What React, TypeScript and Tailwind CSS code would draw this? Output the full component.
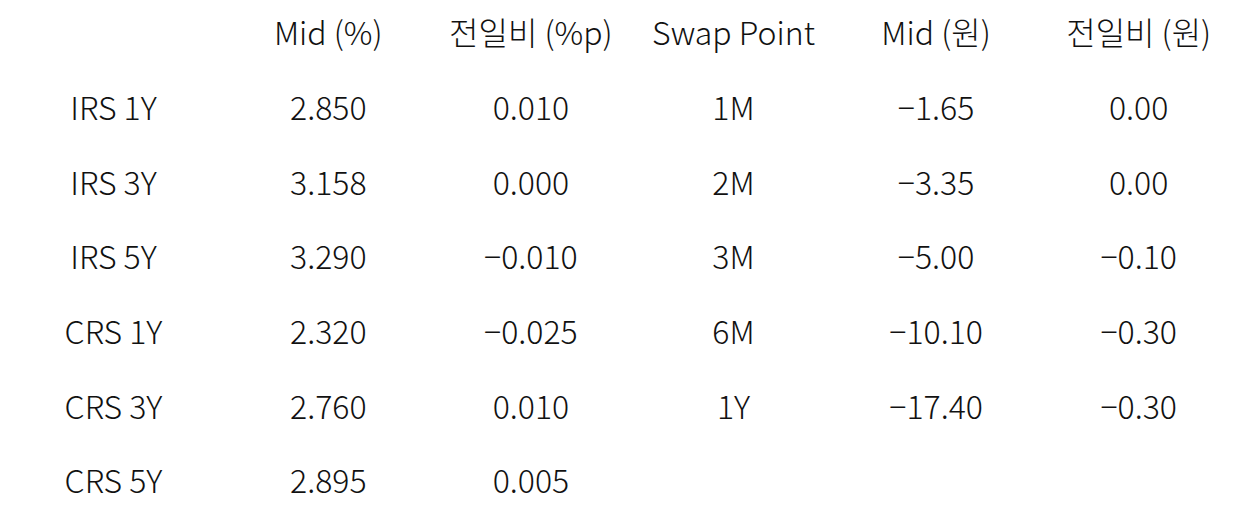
import React from "react";

const headers = ["", "Mid (%)", "전일비 (%p)", "Swap Point", "Mid (원)", "전일비 (원)"];

const rows: string[][] = [
  ["IRS 1Y", "2.850", "0.010", "1M", "−1.65", "0.00"],
  ["IRS 3Y", "3.158", "0.000", "2M", "−3.35", "0.00"],
  ["IRS 5Y", "3.290", "−0.010", "3M", "−5.00", "−0.10"],
  ["CRS 1Y", "2.320", "−0.025", "6M", "−10.10", "−0.30"],
  ["CRS 3Y", "2.760", "0.010", "1Y", "−17.40", "−0.30"],
  ["CRS 5Y", "2.895", "0.005", "", "", ""],
];

const App = () => {
  return (
    <div
      className="w-[1240px] h-[516px] overflow-hidden bg-white text-[#111] text-[32px] font-light"
      style={{ fontFamily: '"Noto Sans CJK KR", "Noto Sans", sans-serif' }}
    >
      <div className="grid grid-cols-[227px_repeat(5,1fr)] auto-rows-[74.67px] -mt-[6px]">
        {headers.map((h, i) => (
          <div key={`h${i}`} className="flex items-center justify-center">
            {h}
          </div>
        ))}
        {rows.map((r, ri) =>
          r.map((c, ci) => (
            <div key={`${ri}-${ci}`} className="flex items-center justify-center">
              {c}
            </div>
          ))
        )}
      </div>
    </div>
  );
};

export default App;
